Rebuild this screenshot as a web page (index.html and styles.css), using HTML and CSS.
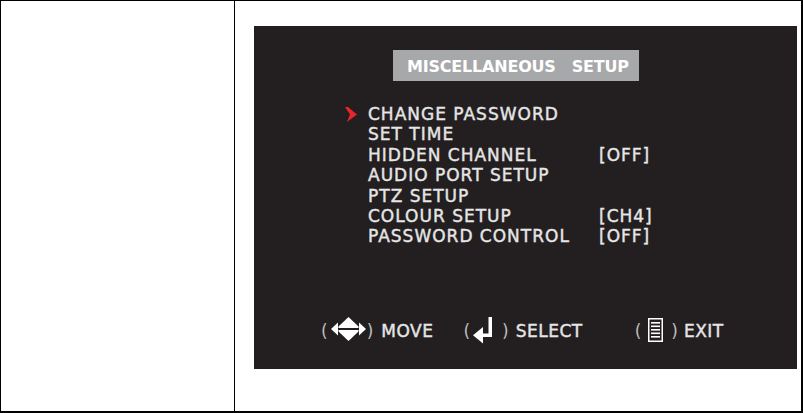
FILE: index.html
```html
<!DOCTYPE html>
<html lang="en">
<head>
    <meta charset="UTF-8">
    <title>Miscellaneous Setup</title>
    <link rel="stylesheet" href="styles.css">
</head>
<body>

<div class="sheet">
    <div class="side"></div>

    <div class="main">
        <div class="osd">
            <div class="osd-title"><span>MISCELLANEOUS</span><span class="gap">SETUP</span></div>

            <ul class="osd-menu">
                <li>
                    <svg class="pointer" width="12" height="15" viewBox="0 0 12 15">
                        <polygon points="0,0 3,0 12,7.5 2,15 5,7.5" fill="#e8252b"/>
                    </svg>
                    <span class="label">CHANGE PASSWORD</span><span class="value"></span>
                </li>
                <li><span></span><span class="label">SET TIME</span><span class="value"></span></li>
                <li><span></span><span class="label">HIDDEN CHANNEL</span><span class="value">[OFF]</span></li>
                <li><span></span><span class="label">AUDIO PORT SETUP</span><span class="value"></span></li>
                <li><span></span><span class="label">PTZ SETUP</span><span class="value"></span></li>
                <li><span></span><span class="label">COLOUR SETUP</span><span class="value">[CH4]</span></li>
                <li><span></span><span class="label">PASSWORD CONTROL</span><span class="value">[OFF]</span></li>
            </ul>

            <div class="osd-keys">
                <div class="key key-move">
                    <span class="paren">(</span>
                    <svg class="ico" width="35" height="24" viewBox="0 0 35 24">
                        <polygon points="0,12 7,5.5 7,18.5" fill="#fff"/>
                        <polygon points="35,12 28,5.5 28,18.5" fill="#fff"/>
                        <polygon points="17.5,0 27.5,9.5 27.5,11 7.5,11 7.5,9.5" fill="#fff"/>
                        <polygon points="7.5,13 27.5,13 27.5,14.5 17.5,24 7.5,14.5" fill="#fff"/>
                    </svg>
                    <span class="paren">)</span>
                    <span class="word">MOVE</span>
                </div>
                <div class="key key-select">
                    <span class="paren">(</span>
                    <svg class="ico" width="20" height="27" viewBox="0 0 20 27">
                        <rect x="15.5" y="0" width="3.5" height="20" fill="#fff"/>
                        <rect x="8" y="16.5" width="11" height="3.5" fill="#fff"/>
                        <polygon points="0,18.2 10,10 10,26.5" fill="#fff"/>
                    </svg>
                    <span class="paren">)</span>
                    <span class="word">SELECT</span>
                </div>
                <div class="key key-exit">
                    <span class="paren">(</span>
                    <svg class="ico" width="15" height="24" viewBox="0 0 15 24">
                        <rect x="0.75" y="0.75" width="13.5" height="22.5" fill="none" stroke="#fff" stroke-width="1.5"/>
                        <rect x="3" y="4" width="9" height="1.6" fill="#fff"/>
                        <rect x="3" y="7.5" width="9" height="1.6" fill="#fff"/>
                        <rect x="3" y="11" width="9" height="1.6" fill="#fff"/>
                        <rect x="3" y="14.5" width="9" height="1.6" fill="#fff"/>
                        <rect x="3" y="18" width="9" height="1.6" fill="#fff"/>
                    </svg>
                    <span class="paren">)</span>
                    <span class="word">EXIT</span>
                </div>
            </div>
        </div>
    </div>
</div>

</body>
</html>
```

FILE: styles.css
```css
body {
    margin: 0;
    background-color: #ffffff;
    font-family: "DejaVu Sans", Verdana, sans-serif;
}
.sheet {
    display: flex;
    width: 803px;
    height: 413px;
    box-sizing: border-box;
    border-style: solid;
    border-color: #000000;
    border-width: 1px 2px 2px 1px;
}
.side {
    width: 233px;
    border-right: 1px solid #000000;
}
.main {
    flex: 1;
    padding: 25px 0 0 19px;
}
.osd {
    display: flex;
    flex-direction: column;
    width: 543px;
    height: 343px;
    box-sizing: border-box;
    padding-bottom: 24px;
    background-color: #231f20; /* print black */
    color: #e6e6e6;
}
.osd-title {
    margin: 24px 0 0 139px;
    width: 246px;
    height: 31px;
    box-sizing: border-box;
    padding: 2px 0 0 14px;
    line-height: 29px;
    background-color: #a7a8aa;
    color: #ffffff;
    font-size: 16px;
    font-weight: bold;
    letter-spacing: -0.2px;
    white-space: nowrap;
}
.osd-title .gap {
    margin-left: 16px;
}
.osd-menu {
    list-style: none;
    margin: 23px 0 0 0;
    padding: 0 0 0 91px;
}
.osd-menu li {
    display: grid;
    grid-template-columns: 23px 231px auto;
    align-items: start;
    font-size: 17px;
    line-height: 20.4px;
    letter-spacing: 1px;
    white-space: nowrap;
    -webkit-text-stroke: 0.4px #e6e6e6;
}
.pointer {
    display: block;
    margin-top: 3px;
}
.osd-keys {
    display: flex;
    align-items: flex-start;
    margin-top: auto;
    height: 28px;
    padding-left: 67px;
    font-size: 17px;
    line-height: 28px;
    letter-spacing: 0.5px;
    white-space: nowrap;
}
.word {
    -webkit-text-stroke: 0.4px #e6e6e6;
}
.key {
    display: flex;
    align-items: flex-start;
}
.paren {
    color: #bdbdbd;
    letter-spacing: 0;
}
.ico {
    display: block;
}
.key-move .ico { margin: 0 1px 0 3px; }
.key-move .word { margin-left: 8px; }
.key-select { margin-left: 30px; }
.key-select .ico { margin: 0 9px 0 3px; }
.key-select .word { margin-left: 7px; }
.key-exit { margin-left: 52px; }
.key-exit .ico { margin: 1px 8px 0 7px; }
.key-exit .word { margin-left: 6px; }
```
